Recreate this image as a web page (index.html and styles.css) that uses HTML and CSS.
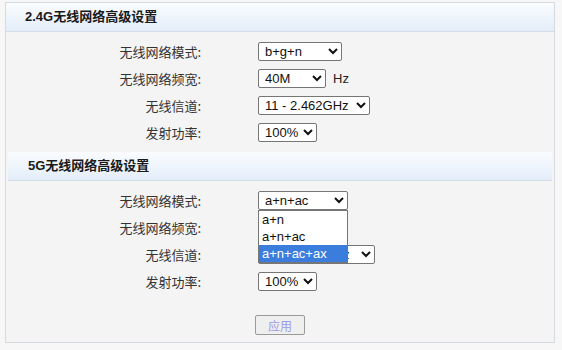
FILE: index.html
```html
<!DOCTYPE html>
<html lang="zh-CN">
<head>
    <meta charset="UTF-8">
    <title>无线高级设置</title>
    <link rel="stylesheet" href="styles.css">
</head>
<body>
    <div class="panel">
        <h2 class="section-title">2.4G无线网络高级设置</h2>
        <div class="form">
            <div class="row">
                <label>无线网络模式:</label>
                <div class="field">
                    <select class="w-mode"><option>b+g+n</option></select>
                </div>
            </div>
            <div class="row">
                <label>无线网络频宽:</label>
                <div class="field">
                    <select class="w-band"><option>40M</option></select>
                    <span class="unit">Hz</span>
                </div>
            </div>
            <div class="row">
                <label>无线信道:</label>
                <div class="field">
                    <select class="w-chan"><option>11 - 2.462GHz</option></select>
                </div>
            </div>
            <div class="row">
                <label>发射功率:</label>
                <div class="field">
                    <select class="w-power"><option>100%</option></select>
                </div>
            </div>
        </div>

        <h2 class="section-title inset">5G无线网络高级设置</h2>
        <div class="form">
            <div class="row">
                <label>无线网络模式:</label>
                <div class="field dropdown">
                    <select class="w-mode5"><option>a+n+ac</option></select>
                    <ul class="dropdown-list">
                        <li>a+n</li>
                        <li>a+n+ac</li>
                        <li class="active">a+n+ac+ax</li>
                    </ul>
                </div>
            </div>
            <div class="row">
                <label>无线网络频宽:</label>
                <div class="field">
                    <select class="w-band"><option>80M</option></select>
                </div>
            </div>
            <div class="row">
                <label>无线信道:</label>
                <div class="field">
                    <select class="w-chan5"><option>36 - 5.180GHz</option></select>
                </div>
            </div>
            <div class="row">
                <label>发射功率:</label>
                <div class="field">
                    <select class="w-power"><option>100%</option></select>
                </div>
            </div>
        </div>

        <div class="actions">
            <button class="apply" disabled>应用</button>
        </div>
    </div>
</body>
</html>
```

FILE: styles.css
```css
/* Global */
body {
    margin: 0;
    background-color: #f7f7f7;
    font-family: "Liberation Sans", "Noto Sans CJK SC", sans-serif;
    font-size: 13px;
    color: #333;
}

/* Outer panel */
.panel {
    width: 548px;
    margin: 2px 0 0 5px;
    background-color: #f4f4f4;
    border: 1px solid #d5dae1;
    padding-bottom: 7px;
}

.section-title {
    margin: 0;
    height: 28px;
    line-height: 28px;
    padding-left: 19px;
    font-size: 13px;
    font-weight: bold;
    color: #1a1a1a;
    background: linear-gradient(to bottom, #fafcfe, #e3edf9);
    border-bottom: 1px solid #d3dce7;
}

.section-title.inset {
    margin: 0 2px;
    padding-left: 20px;
}

/* Form rows */
.form {
    padding: 6px 0 6px;
}

.row {
    display: grid;
    grid-template-columns: 195px 1fr;
    column-gap: 57px;
    align-items: center;
    height: 27px;
}

.row label {
    text-align: right;
    font-family: "Noto Sans CJK SC", sans-serif;
    font-size: 13px;
    color: #333;
}

.field {
    display: flex;
    align-items: center;
    gap: 7px;
}

select {
    height: 19px;
    padding: 0 0 0 2px;
    font-family: "Liberation Sans", sans-serif;
    font-size: 13px;
    color: #111;
    background-color: #fff;
    border: 1px solid #767676;
    border-radius: 2px;
}

.w-mode { width: 84px; }
.w-band { width: 68px; }
.w-chan { width: 112px; }
.w-chan5 { width: 117px; }
.w-power { width: 59px; }
.w-mode5 { width: 90px; }

.unit {
    font-size: 13px;
    color: #222;
}

/* Open dropdown list */
.dropdown {
    position: relative;
}

.dropdown-list {
    position: absolute;
    left: 0;
    top: 19px;
    width: 88px;
    margin: 0;
    padding: 0;
    list-style: none;
    background-color: #fff;
    border: 1px solid #767676;
    z-index: 5;
}

.dropdown-list li {
    height: 17px;
    line-height: 17px;
    padding-left: 3px;
    font-size: 13px;
    color: #111;
}

.dropdown-list li.active {
    background-color: #3b7ddd;
    color: #fff;
}

/* Buttons */
.actions {
    display: flex;
    justify-content: center;
    padding-top: 14px;
}

.apply {
    width: 50px;
    height: 20px;
    padding: 0;
    font-family: "Noto Sans CJK SC", sans-serif;
    font-size: 12px;
    color: #9c9ce6;
    background-color: #efefef;
    border: 1px solid #9a9a9a;
    border-radius: 2px;
}
```
